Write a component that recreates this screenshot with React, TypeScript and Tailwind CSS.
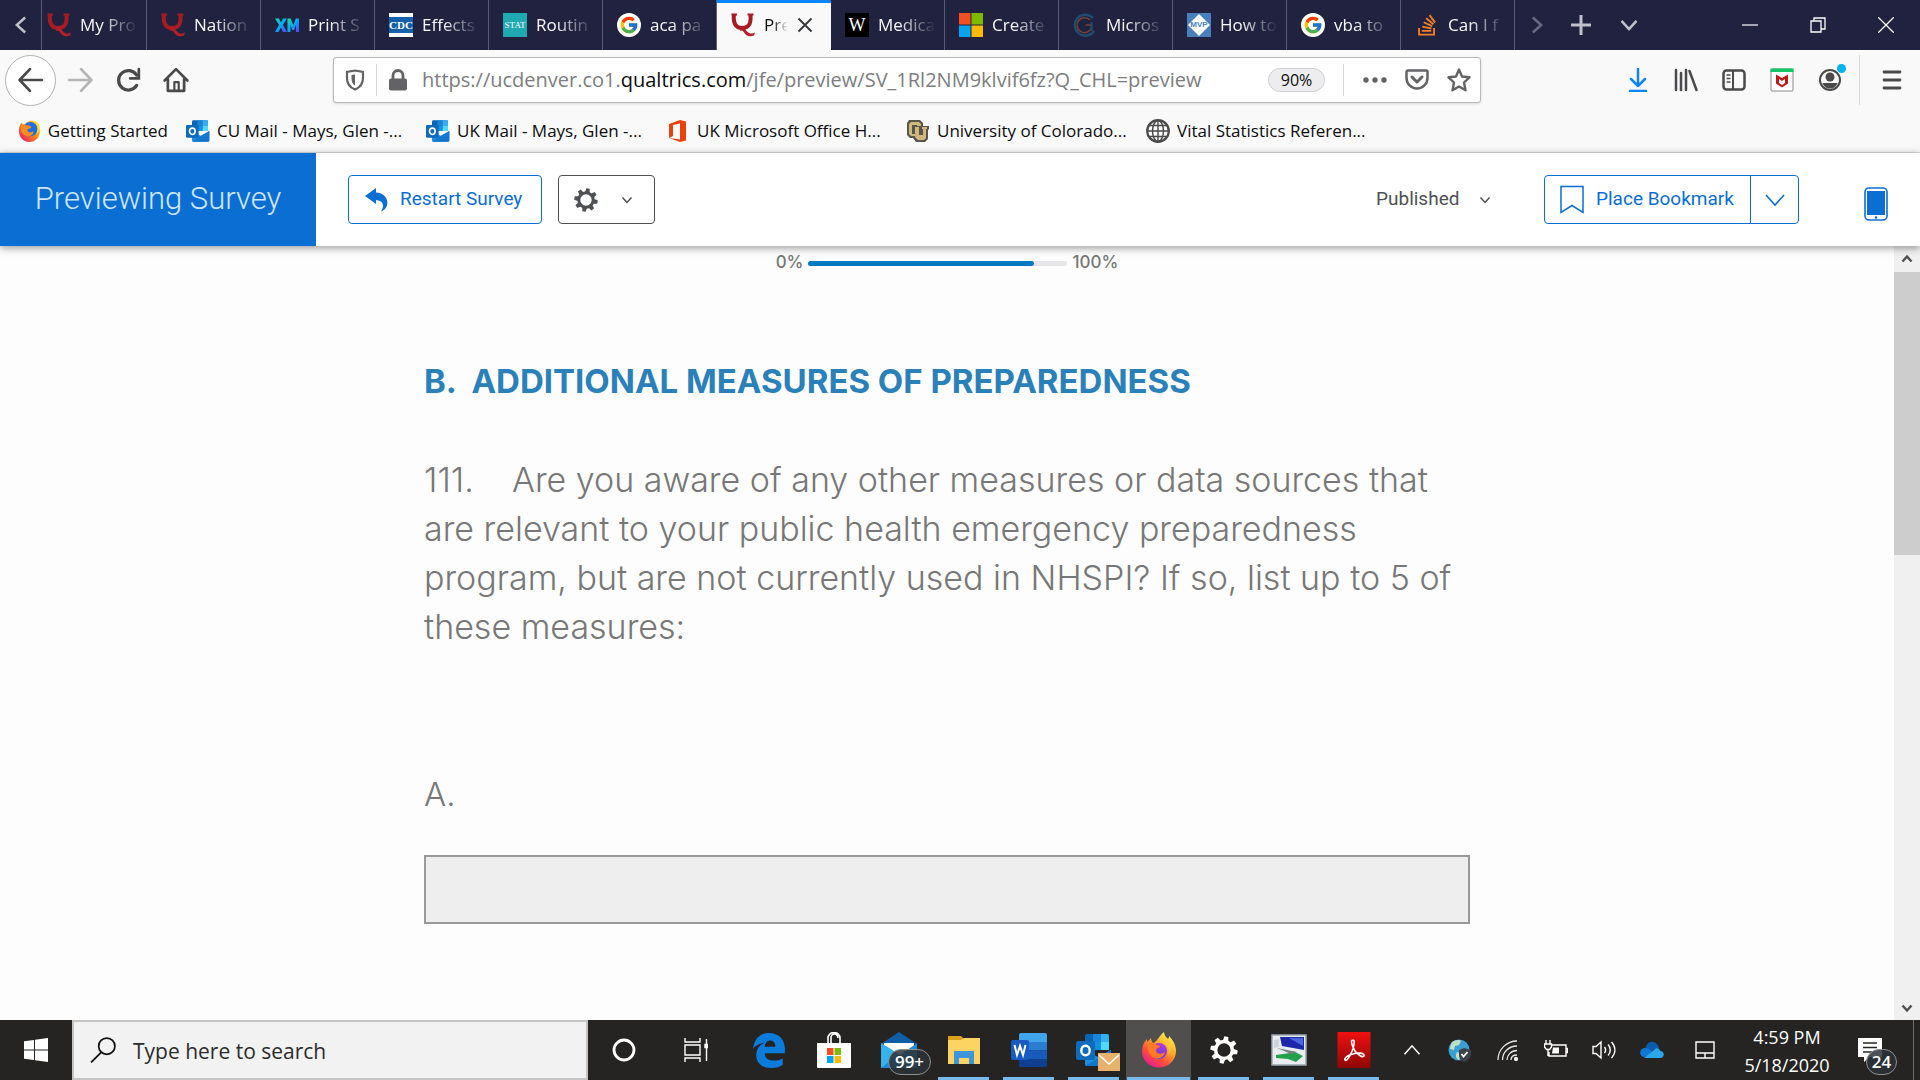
import React from "react";
import { FcGoogle } from "react-icons/fc";
import { FaStackOverflow } from "react-icons/fa";

type P = { className?: string };

const QIcon = ({ className }: P) => (
  <svg viewBox="0 0 24 24" className={className} fill="none">
    <path d="M3 1 C2 9 4 15 11 15 C19 15 20 9 19.500 2" stroke="#a51c24" strokeWidth="4" />
    <path d="M0.500 1.500H6M16.500 1.500H22.500" stroke="#a51c24" strokeWidth="2" />
    <path d="M10 14c3 0 4 2 6 4.500 2 2 5 3 8 1l-1 3c-5 2-8 0-10-3-1-2-2-2-4-1.500z" fill="#b3202a" />
  </svg>
);

const Xm = () => (
  <svg viewBox="0 0 24 24" className="size-6">
    <defs>
      <linearGradient id="xm" x1="0" x2="1" y1="0" y2="1">
        <stop offset="0" stopColor="#21dba0" />
        <stop offset="0.500" stopColor="#05a8f5" />
        <stop offset="1" stopColor="#5c3ff0" />
      </linearGradient>
    </defs>
    <path d="M0 5.500h4L6 9.500l2-4h4L8 12l4 7H8l-2-4.500L3.500 19H0l4-7z" fill="url(#xm)" />
    <path d="M12.500 19V5.500h3.200l2.600 6.500 2.500-6.500H24V19h-3v-7l-1.800 5h-2L15.500 12v7z" fill="url(#xm)" />
  </svg>
);

const Cdc = () => (
  <span className="flex size-6 items-center justify-center bg-white">
    <span className="flex h-4 w-6 items-center justify-center bg-[#1560a8] font-['Liberation_Serif',serif] text-[11px] leading-none font-bold text-white">CDC</span>
  </span>
);
const Stat = () => (
  <span className="flex size-6 items-center justify-center bg-[#1fa9b0] font-['Liberation_Serif',serif] text-[9px] leading-none text-white">STAT</span>
);
const Wiki = () => (
  <span className="flex size-6 items-center justify-center bg-black font-['Liberation_Serif',serif] text-[18px] leading-none text-white">W</span>
);
const Google = () => (
  <span className="flex size-6 items-center justify-center rounded-full bg-white">
    <FcGoogle className="size-5" />
  </span>
);
const MsSquares = ({ className }: P) => (
  <svg viewBox="0 0 24 24" className={className}>
    <path fill="#f25022" d="M0 0h11.500v11.500H0z" />
    <path fill="#7fba00" d="M12.500 0H24v11.500H12.500z" />
    <path fill="#00a4ef" d="M0 12.500h11.500V24H0z" />
    <path fill="#ffb900" d="M12.500 12.500H24V24H12.500z" />
  </svg>
);
const DarkG = () => (
  <svg viewBox="0 0 24 24" className="size-6" fill="none">
    <path d="M20 5a10.500 10.500 0 1 0 1 13" stroke="#1f4c70" strokeWidth="2.500" />
    <path d="M17 7a7.500 7.500 0 1 0 1.500 8v-3h-6" stroke="#7a4138" strokeWidth="1.500" />
    <path d="M18.500 9v9" stroke="#1f4c70" strokeWidth="2" />
  </svg>
);
const Mvp = () => (
  <span className="relative flex size-6 items-center justify-center bg-[#4a7fbd]">
    <svg viewBox="0 0 24 24" className="absolute inset-0 size-6"><path d="M12 1 23 12 12 23 1 12z" fill="#fff" /></svg>
    <span className="relative font-['Liberation_Sans',sans-serif] text-[8px] leading-none font-bold text-[#4a7fbd]">MVP</span>
  </span>
);

const Outlook = ({ className }: P) => (
  <svg viewBox="0 0 36 36" className={className}>
    <path d="M11 2h20a2 2 0 0 1 2 2v14H9V4a2 2 0 0 1 2-2z" fill="#0a64b4" />
    <path d="M17 2h8v8h-8z" fill="#1a86d9" />
    <path d="M25 2h6a2 2 0 0 1 2 2v6h-8z" fill="#33b0f2" />
    <path d="M17 10h8v8h-8z" fill="#1490df" />
    <path d="M25 10h8v8h-8z" fill="#50d9ff" />
    <path d="M9 18 22 25 35 18v14a2 2 0 0 1-2 2H11a2 2 0 0 1-2-2z" fill="#1a8fe0" />
    <path d="M9 34 35 18v14a2 2 0 0 1-2 2z" fill="#1378cc" />
    <rect x="0" y="9" width="19" height="19" rx="2" fill="#0f6cbd" />
    <ellipse cx="9.500" cy="18.500" rx="4.200" ry="4.800" fill="none" stroke="#fff" strokeWidth="2.400" />
  </svg>
);

const FirefoxOld = () => (
  <svg viewBox="0 0 24 24" className="size-6">
    <defs>
      <linearGradient id="fo" x1="0.900" y1="0.100" x2="0.100" y2="0.900">
        <stop offset="0" stopColor="#ffe226" />
        <stop offset="0.450" stopColor="#ff8a16" />
        <stop offset="1" stopColor="#e3206a" />
      </linearGradient>
    </defs>
    <path d="M15 1c6 1 8 6 8 11 0 7-5 11.500-11 11.500S1 19 1 12C1 8 2 5 4 3l1 3c3-2 6-5 10-5z" fill="url(#fo)" />
    <circle cx="13" cy="10" r="7.500" fill="#1c6fe6" />
    <path d="M3 6c3-2 5-1 6 0 2 0 4 0 5 2-1 2-4 1-4 3 0 3 4 3 6 1 1 4-3 6-7 5-5-1-7-6-6-11z" fill="#ff8d1c" />
    <path d="M17 1c4 4 5 10 2 14 5-3 5-10 1-12z" fill="#ffe12e" />
  </svg>
);

const FirefoxNew = () => (
  <svg viewBox="0 0 36 36" className="size-9">
    <defs>
      <linearGradient id="fx" x1="0.800" y1="0.050" x2="0.200" y2="0.950">
        <stop offset="0" stopColor="#fff44f" />
        <stop offset="0.400" stopColor="#ffa12b" />
        <stop offset="0.700" stopColor="#ff4c3c" />
        <stop offset="1" stopColor="#e81b8f" />
      </linearGradient>
      <linearGradient id="fxp" x1="0.700" y1="0" x2="0.300" y2="1">
        <stop offset="0" stopColor="#b635e0" />
        <stop offset="1" stopColor="#5a3fd6" />
      </linearGradient>
    </defs>
    <path d="M23 0c0 3 2 5 4 7 1-1 1-2 1-3 4 4 7 9 7 15 0 9-7.500 16.500-17 16.500S1 28 1 19C1 14 3 10 6 7c0 1 0 2 .5 3L10 6c0 2 1 4 2 5 4-1 5-6 11-11z" fill="url(#fx)" />
    <circle cx="18" cy="19" r="8" fill="url(#fxp)" />
    <path d="M7 12c3-2 7-1 9 1l3 1c0 2-4 2-4 4 0 4 5 5 9 2-1 6-8 8-12 5-4-2-6-8-5-13z" fill="#ff7a22" />
    <path d="M22 9c6 3 7 9 5 14 4-4 4-12-1-16z" fill="#ffc936" />
  </svg>
);

const Chevron = ({ className, w = 2 }: P & { w?: number }) => (
  <svg viewBox="0 0 24 24" className={className} fill="none" stroke="currentColor" strokeWidth={w}>
    <path d="M3 7l9 10 9-10" />
  </svg>
);

const gearTeeth = [0, 45, 90, 135, 180, 225, 270, 315];
const Gear = ({ className }: P) => (
  <svg viewBox="0 0 24 24" className={className}>
    <circle cx="12" cy="12" r="7.200" fill="none" stroke="currentColor" strokeWidth="3" />
    {gearTeeth.map((a) => (
      <path key={a} d="M9.700 4 10.300 0.300h3.400L14.300 4z" fill="currentColor" transform={`rotate(${a + 10} 12 12)`} />
    ))}
  </svg>
);

const tabs: { label: string; icon: React.ReactNode; active?: boolean }[] = [
  { label: "Nation", icon: <QIcon className="size-6" /> },
  { label: "Print S", icon: <Xm /> },
  { label: "Effects", icon: <Cdc /> },
  { label: "Routin", icon: <Stat /> },
  { label: "aca pa", icon: <Google /> },
  { label: "Pre", icon: <QIcon className="size-6" />, active: true },
  { label: "Medica", icon: <Wiki /> },
  { label: "Create", icon: <MsSquares className="size-6" /> },
  { label: "Micros", icon: <DarkG /> },
  { label: "How to", icon: <Mvp /> },
  { label: "vba to", icon: <Google /> },
  { label: "Can I f", icon: <FaStackOverflow className="size-6 text-[#f48024]" /> },
];

const fade = "[mask-image:linear-gradient(to_right,black_35%,transparent)]";

function TabBar() {
  return (
    <header className="flex h-[50px] shrink-0 items-stretch bg-[#20223f] text-[17px] text-[#f9f9fa]">
      <button aria-label="Scroll tabs left" className="flex w-[41px] items-center justify-center text-[#c0c0cb]">
        <Chevron className="size-5 rotate-90" w={3} />
      </button>
      <div role="tablist" className="flex">
        <button role="tab" className="flex w-[106px] items-center gap-[9px] border-x border-[#5c5d74] pl-[5px]">
          <QIcon className="size-6 shrink-0" />
          <span className={`w-[58px] text-left whitespace-nowrap ${fade}`}>My Pro</span>
        </button>
        {tabs.map((t) =>
          t.active ? (
            <div key={t.label} role="tab" aria-selected className="flex w-[114px] items-center gap-[9px] border-t-[3px] border-[#0a84ff] bg-[#f9f9fa] pb-[3px] pl-[14px] text-[#0c0c0d]">
              {t.icon}
              <span className={`w-6 whitespace-nowrap ${fade}`}>{t.label}</span>
              <button aria-label="Close tab">
                <svg viewBox="0 0 16 16" className="size-4" stroke="#3a3a3c" strokeWidth="2"><path d="M1.500 1.500l13 13M14.500 1.500l-13 13" /></svg>
              </button>
            </div>
          ) : (
            <button key={t.label} role="tab" className="flex w-[114px] items-center gap-[9px] border-r border-[#5c5d74] pl-[14px]">
              <span className="shrink-0">{t.icon}</span>
              <span className={`w-[58px] text-left whitespace-nowrap ${fade}`}>{t.label}</span>
            </button>
          ),
        )}
      </div>
      <div className="flex flex-1 items-center text-[#c0c0cb]">
        <button aria-label="Scroll tabs right" className="flex w-11 justify-center text-[#6a6b82]"><Chevron className="size-5 -rotate-90" w={3} /></button>
        <button aria-label="New tab" className="flex w-11 justify-center">
          <svg viewBox="0 0 22 22" className="size-[22px]" stroke="currentColor" strokeWidth="3"><path d="M11 1v20M1 11h20" /></svg>
        </button>
        <button aria-label="List all tabs" className="flex w-[52px] justify-center"><Chevron className="size-5" w={3} /></button>
      </div>
      <div className="flex items-center pr-[26px] text-white">
        <button aria-label="Minimize" className="w-[68px]"><svg viewBox="0 0 16 16" className="size-4" stroke="currentColor" strokeWidth="1.200"><path d="M0 8h16" /></svg></button>
        <button aria-label="Restore" className="w-[68px]"><svg viewBox="0 0 16 16" className="size-4" fill="none" stroke="currentColor" strokeWidth="1.300"><path d="M1 4h10v11H1zM4 4V1h11v11h-4" /></svg></button>
        <button aria-label="Close"><svg viewBox="0 0 16 16" className="size-4" stroke="currentColor" strokeWidth="1.300"><path d="M0 0l16 16M16 0 0 16" /></svg></button>
      </div>
    </header>
  );
}

function NavBar() {
  return (
    <div className="flex h-[60px] shrink-0 items-center text-[#4a4a4b]">
      <div className="flex w-[333px] shrink-0 items-center pl-[5px]">
        <button aria-label="Back" className="flex size-[51px] items-center justify-center rounded-full border border-[#b1b1b3] bg-white">
          <svg viewBox="0 0 24 24" className="size-[26px]" fill="none" stroke="currentColor" strokeWidth="2.500" strokeLinecap="round" strokeLinejoin="round"><path d="M22 12H2M11 2 1.500 12 11 22" /></svg>
        </button>
        <button aria-label="Forward" className="ml-[11px] text-[#b5b5b6]">
          <svg viewBox="0 0 24 24" className="size-[26px]" fill="none" stroke="currentColor" strokeWidth="2.500" strokeLinecap="round" strokeLinejoin="round"><path d="M2 12h20M13 2l9.500 10L13 22" /></svg>
        </button>
        <button aria-label="Reload" className="ml-[22px]">
          <svg viewBox="0 0 24 24" className="size-[26px]" fill="none" stroke="currentColor" strokeWidth="3" strokeLinecap="round"><path d="M20 17a9 9 0 1 1 0-9.500" /><path d="M22 2v8.500h-8" strokeWidth="2.500" /></svg>
        </button>
        <button aria-label="Home" className="ml-[22px]">
          <svg viewBox="0 0 24 24" className="size-[26px]" fill="none" stroke="currentColor" strokeWidth="2.500" strokeLinecap="round" strokeLinejoin="round"><path d="M1.500 12.500 12 2l10.500 10.500M4.500 11v11h15V11" /><path d="M10.500 21v-7h4v7" strokeWidth="2" /></svg>
        </button>
      </div>
      <div className="flex h-[46px] min-w-0 flex-1 items-center rounded-[3px] border border-[#b8b8ba] bg-white pl-[11px] text-[#636365] shadow-sm">
        <button aria-label="Tracking protection">
          <svg viewBox="0 0 20 22" className="h-[22px] w-5" fill="none"><path d="M10 1.500 18 3v6c0 6-3 9.500-8 11.500C5 18.500 2 15 2 9V3z" stroke="currentColor" strokeWidth="2.200" /><path d="M10 5.500v11c-2.500-1.500-3.500-3.500-3.500-7V6z" fill="currentColor" /></svg>
        </button>
        <span className="mx-[11px] h-8 w-px bg-[#d7d7db]" />
        <button aria-label="Site information">
          <svg viewBox="0 0 20 22" className="h-[22px] w-5"><path d="M5 10V6.500a5 5 0 0 1 10 0V10" fill="none" stroke="currentColor" strokeWidth="2.800" /><rect x="1" y="9.500" width="18" height="12" rx="2" fill="currentColor" /></svg>
        </button>
        <div role="textbox" aria-label="Address" className="ml-[14px] flex-1 text-[20px] whitespace-nowrap text-[#7d7d80]">
          https://ucdenver.co1.<span className="text-[#0c0c0d]">qualtrics.com</span>/jfe/preview/SV_1Rl2NM9klvif6fz?Q_CHL=preview
        </div>
        <button className="flex h-6 w-[57px] items-center justify-center rounded-full border border-[#cfcfd1] bg-[#ededf0] text-[16px] text-[#0c0c0d]">90%</button>
        <span className="mr-[19px] ml-[18px] h-8 w-px bg-[#d7d7db]" />
        <div className="flex items-center gap-[18px] pr-[9px]">
          <button aria-label="Page actions"><svg viewBox="0 0 24 24" className="size-6" fill="currentColor"><circle cx="3" cy="12" r="2.700" /><circle cx="12" cy="12" r="2.700" /><circle cx="21" cy="12" r="2.700" /></svg></button>
          <button aria-label="Save to Pocket"><svg viewBox="0 0 24 24" className="size-6" fill="none" stroke="currentColor" strokeWidth="2.500" strokeLinecap="round" strokeLinejoin="round"><path d="M3 2.500h18a1.500 1.500 0 0 1 1.500 1.500v6a10.500 10.500 0 0 1-21 0V4A1.500 1.500 0 0 1 3 2.500z" /><path d="M7 9l5 5 5-5" strokeWidth="3" /></svg></button>
          <button aria-label="Bookmark this page"><svg viewBox="0 0 24 24" className="size-6" fill="none" stroke="currentColor" strokeWidth="2.400" strokeLinejoin="round"><path d="M12 1.500l3 7 7.500.8-5.500 5.200 1.500 7.800L12 18.500l-6.500 3.800L7 14.500 1.500 9.300 9 8.500z" /></svg></button>
        </div>
      </div>
      <div className="flex w-[439px] shrink-0 items-center pl-[145px]">
        <div className="flex items-center gap-6">
          <button aria-label="Downloads" className="text-[#0a84ff]"><svg viewBox="0 0 24 24" className="size-6" fill="none" stroke="currentColor" strokeWidth="2.500" strokeLinecap="round" strokeLinejoin="round"><path d="M12 1v17M5 11l7 7 7-7M4 23h16" /></svg></button>
          <button aria-label="Library"><svg viewBox="0 0 24 24" className="size-6" fill="none" stroke="currentColor" strokeWidth="2.500" strokeLinecap="round"><path d="M2 2v20M7 5v17M12 2v20M15.500 3l7 19" /></svg></button>
          <button aria-label="Sidebars"><svg viewBox="0 0 24 24" className="size-6" fill="none" stroke="currentColor" strokeWidth="2.500"><rect x="1.500" y="2.500" width="21" height="19" rx="3" /><path d="M11 3v18" strokeWidth="2" /><path d="M4.500 7h4M4.500 10.500h4M4.500 14h4" strokeWidth="1.500" /></svg></button>
          <button aria-label="McAfee WebAdvisor"><svg viewBox="0 0 24 24" className="size-6"><rect x="1" y="1" width="22" height="22" rx="1" fill="#fff" stroke="#8a8a8a" /><path d="M0.500 0.500h23V4h-23z" fill="#12c765" /><path d="M6 6.500l6 3.500 6-3.500v9l-6 4-6-4z" fill="#c01818" /><path d="M9 11l3 2 3-2v4l-3 2-3-2z" fill="#fff" /></svg></button>
          <button aria-label="Account" className="relative">
            <svg viewBox="0 0 24 24" className="size-6"><circle cx="12" cy="12" r="10" fill="none" stroke="currentColor" strokeWidth="2" /><circle cx="12" cy="9" r="4.500" fill="currentColor" /><path d="M4.500 15h15c-1 3.500-4 5.500-7.500 5.500S5.500 18.500 4.500 15z" fill="currentColor" /></svg>
            <span className="absolute -top-1 -right-1 size-[9px] rounded-full bg-[#00b3f4]" />
          </button>
        </div>
        <span className="mr-5 ml-[17px] h-[50px] w-px bg-[#d7d7db]" />
        <button aria-label="Menu"><svg viewBox="0 0 24 24" className="size-6" stroke="currentColor" strokeWidth="2.800" strokeLinecap="round"><path d="M4 4h16M4 12h16M4 20h16" /></svg></button>
      </div>
    </div>
  );
}

const Office = () => (
  <svg viewBox="0 0 24 24" className="size-6"><path d="M3 5 14 1l6 1.500v19L14 23 3 19l11 1.500V4.500L7 6v11l-4 2z" fill="#e8420c" /></svg>
);
const Cu = () => (
  <svg viewBox="0 0 24 24" className="size-6">
    <path d="M3 1h11l3 3v3h6v3l-1 1v9l-3 3H10l-3-4H4l-3-3V4z" fill="#5a554c" />
    <path d="M5 3h8l2 2v2h-4V6H6v9h3v2H5l-2-2V5z" fill="#cfb87c" />
    <path d="M9 8h4v8h4V10h-1V8h5v2h-1v9l-2 2h-6l-3-3v-8H9z" fill="#cfb87c" />
  </svg>
);
const Globe = () => (
  <svg viewBox="0 0 24 24" className="size-6" fill="none" stroke="#4a4a4b" strokeWidth="1.400"><circle cx="12" cy="12" r="10.800" strokeWidth="2.200" /><ellipse cx="12" cy="12" rx="5.500" ry="10.500" /><path d="M12 1v22M1 12h22M3 6.500h18M3 17.500h18" /></svg>
);
const bookmarks = [
  { label: "Getting Started", icon: <FirefoxOld /> },
  { label: "CU Mail - Mays, Glen -...", icon: <Outlook className="size-6" /> },
  { label: "UK Mail - Mays, Glen -...", icon: <Outlook className="size-6" /> },
  { label: "UK Microsoft Office H...", icon: <Office /> },
  { label: "University of Colorado...", icon: <Cu /> },
  { label: "Vital Statistics Referen...", icon: <Globe /> },
];

function Bookmarks() {
  return (
    <nav aria-label="Bookmarks" className="flex h-[43px] shrink-0 items-center gap-[18px] border-b border-[#dcdcde] pl-[18px] text-[17px] text-[#0c0c0d]">
      {bookmarks.map((b, i) => (
        <a key={b.label} href="#" className={`flex items-center gap-[7px] whitespace-nowrap ${i > 0 ? "w-[222px]" : "w-[150px]"}`}>
          {b.icon}
          {b.label}
        </a>
      ))}
    </nav>
  );
}

function PreviewHeader() {
  return (
    <div className="relative z-10 flex h-[93px] shrink-0 items-center bg-white font-[Roboto,sans-serif] text-[19px] shadow-[0_2px_8px_rgba(0,0,0,0.4)]">
      <h1 className="flex h-full w-[316px] items-center justify-center bg-[#0b6ed3] text-[31px] font-light text-[#cfe6fb]">Previewing Survey</h1>
      <button className="ml-8 flex h-[49px] w-[194px] items-center gap-[11px] rounded-[4px] border border-[#0b6ed3] pl-4 text-[#0b6ed3]">
        <svg viewBox="0 0 24 24" className="size-6" fill="currentColor"><path d="M0 8 11 0v4.500c8 0 13 7 11 13-1 3-3 5-6 6 4-6 2-11-5-11.500V16z" /></svg>
        Restart Survey
      </button>
      <button aria-label="Settings" className="ml-4 flex h-[49px] w-[97px] items-center gap-[23px] rounded-[4px] border border-[#4e5053] pl-[15px] text-[#4e5053]">
        <Gear className="size-6" />
        <Chevron className="size-3" w={3} />
      </button>
      <div className="relative ml-auto flex items-center text-[#4e5053]">
        <select aria-label="Version" className="w-[115px] appearance-none bg-transparent">
          <option>Published</option>
        </select>
        <Chevron className="pointer-events-none absolute right-0 size-3" w={3} />
      </div>
      <div className="ml-[53px] flex h-[49px] rounded-[4px] border border-[#0b6ed3] text-[#0b6ed3]">
        <button className="flex w-[205px] items-center gap-3 pl-[15px]">
          <svg viewBox="0 0 24 30" className="h-[30px] w-6" fill="none" stroke="currentColor" strokeWidth="1.500"><path d="M1 1.500h22v26l-11-7-11 7z" /></svg>
          Place Bookmark
        </button>
        <button aria-label="Bookmark options" className="flex w-[48px] items-center justify-center border-l border-[#0b6ed3]"><Chevron className="size-6" w={1.6} /></button>
      </div>
      <button aria-label="Mobile view" className="mr-8 ml-[65px] pt-2">
        <svg viewBox="0 0 24 34" className="h-[34px] w-6"><rect x="1" y="1" width="22" height="32" rx="4" fill="#fff" stroke="#0b6ed3" strokeWidth="1.600" /><path d="M3 4h18v24H3z" fill="#0b6ed3" /><circle cx="12" cy="30.500" r="1.300" fill="#0b6ed3" /></svg>
      </button>
    </div>
  );
}

function Survey() {
  return (
    <div className="flex min-h-0 flex-1 bg-[#fdfdfd] font-[Inter,sans-serif]">
      <main className="min-w-0 flex-1 overflow-hidden">
        <div className="mx-auto max-w-[1046px] text-[#777]">
          <div className="flex h-[34px] items-center justify-center gap-[5px] text-[17px] font-medium">
            <span>0%</span>
            <div role="progressbar" aria-valuenow={87} className="h-[5px] w-[259px] rounded-full bg-[#e6e6e9]">
              <div className="h-full w-[87%] rounded-full bg-[#007ac0]" />
            </div>
            <span>100%</span>
          </div>
          <h2 className="mt-[77px] text-[33px] leading-[49px] font-bold whitespace-pre text-[#2a80b9]">B.  ADDITIONAL MEASURES OF PREPAREDNESS</h2>
          <p className="mt-[49px] text-[34px] leading-[49px] font-light whitespace-pre">
            {"111.    Are you aware of any other measures or data sources that\nare relevant to your public health emergency preparedness\nprogram, but are not currently used in NHSPI? If so, list up to 5 of\nthese measures:"}
          </p>
          <label htmlFor="answer-a" className="mt-[119px] block text-[33px] leading-[49px] font-light">A.</label>
          <input id="answer-a" type="text" className="mt-9 block h-[69px] w-full border-2 border-[#999] bg-[#eee] px-4" />
        </div>
      </main>
      <div className="flex w-[26px] shrink-0 flex-col items-center bg-[#f0f0f0] text-[#505050]">
        <button aria-label="Scroll up" className="flex h-[26px] items-center"><Chevron className="size-3 rotate-180" w={5} /></button>
        <div className="h-[283px] w-full bg-[#cdcdcd]" />
        <button aria-label="Scroll down" className="mt-auto flex h-6 items-center"><Chevron className="size-3" w={5} /></button>
      </div>
    </div>
  );
}

const Badge = ({ children, className }: { children: React.ReactNode; className: string }) => (
  <span className={`absolute flex h-[26px] items-center justify-center rounded-full border border-[#8f9090] bg-[#2d3338]/85 text-[17px] font-semibold text-white ${className}`}>{children}</span>
);

const apps: { label: string; run?: boolean; active?: boolean; icon: React.ReactNode }[] = [
  { label: "Microsoft Edge", icon: <svg viewBox="0 0 32 34" className="size-9"><path d="M1 16C2 6 8 1 16 1c9 0 15 6 15 15v4H12c0 5 4 7 9 7 3 0 6-1 8-2v6c-3 2-6 3-11 3C9 34 4 29 4 22c0-6 3-10 8-12-6 1-9 3-11 6zm11-2h10c0-4-2-6-5-6s-5 3-5 6z" fill="#0b7cdb" /></svg> },
  { label: "Microsoft Store", icon: <svg viewBox="0 0 36 36" className="size-9"><path d="M12 11V6a6 5.500 0 0 1 12 0v5M15 11V6a3 3.500 0 0 1 7 0" fill="none" stroke="#fff" strokeWidth="1.600" /><path d="M1 11h34v24a1 1 0 0 1-1 1H2a1 1 0 0 1-1-1z" fill="#fff" /><path d="M11 16h6.500v7H11z" fill="#f25022" /><path d="M18.500 16H25v7h-6.500z" fill="#7fba00" /><path d="M11 24h6.500v7H11z" fill="#00a4ef" /><path d="M18.500 24H25v7h-6.500z" fill="#ffb900" /></svg> },
  { label: "Mail", icon: <><svg viewBox="0 0 36 36" className="size-9"><path d="M0 12 18 0l18 12z" fill="#0f5ea8" /><path d="M3 11h30v12H3z" fill="#fff" /><path d="M0 11l18 13 18-13v25H0z" fill="#1c8ad6" /><path d="M0 36 18 22 0 11z" fill="#35b3ee" /></svg><Badge className="top-[29px] left-[21px] w-[43px]">99+</Badge></> },
  { label: "File Explorer", run: true, icon: <svg viewBox="0 0 36 36" className="size-9"><path d="M2 4h13l3 3v5H2z" fill="#dca020" /><path d="M2 8h13l3-2h16v26H2z" fill="#fcd462" /><path d="M8 19h20v13h-5v-6H13v6H8z" fill="#3f95da" /></svg> },
  { label: "Word", run: true, icon: <svg viewBox="0 0 36 36" className="size-9"><path d="M10 1h24a2 2 0 0 1 2 2v7H8V3a2 2 0 0 1 2-2z" fill="#41a5ee" /><path d="M8 10h28v8.500H8z" fill="#2b7cd3" /><path d="M8 18.500h28V27H8z" fill="#185abd" /><path d="M8 27h28v6a2 2 0 0 1-2 2H10a2 2 0 0 1-2-2z" fill="#103f91" /><rect y="8" width="18" height="20" rx="2" fill="#185abd" /><path d="M3.500 13 6 23l3-9 3 9 2.500-10" fill="none" stroke="#fff" strokeWidth="2" /></svg> },
  { label: "Outlook", run: true, icon: <><Outlook className="size-9" /><svg viewBox="0 0 22 18" className="absolute right-[5px] bottom-[9px] h-[18px] w-[22px]"><path d="M0 0h22v18H0z" fill="#e9b26c" /><path d="M1 2l10 9L21 2" fill="none" stroke="#fff" strokeWidth="1.500" /></svg></> },
  { label: "Firefox", run: true, active: true, icon: <FirefoxNew /> },
  { label: "Settings", run: true, icon: <Gear className="size-7 text-white" /> },
  { label: "Installer", run: true, icon: <svg viewBox="0 0 36 32" className="h-8 w-9"><path d="M1 1h34v30H1z" fill="#e9edf0" stroke="#9aa6b0" strokeWidth="1.500" /><path d="M9 3h24v13l-22-4z" fill="#1c28a8" /><path d="M18 4h14v8z" fill="#4b66e0" /><path d="M3 6l5-1v8l-5 1z" fill="#cfd5d8" /><path d="M5 21l14-2 3-2 10 5-7 6-8-3-12-1z" fill="#22a04c" /><path d="M6 14l20 4-6 2z" fill="#777f86" /></svg> },
  { label: "Adobe Acrobat", run: true, icon: <svg viewBox="0 0 36 36" className="size-9"><defs><linearGradient id="pdf" x1="0" y1="0" x2="0" y2="1"><stop offset="0" stopColor="#f21010" /><stop offset="1" stopColor="#8e0606" /></linearGradient></defs><path d="M1.500 0h33v36h-33z" fill="url(#pdf)" /><path d="M17 8c-3 0-1 6 2 11 3 4 8 7 9 5 1-3-6-4-11-2-5 1-9 4-8 6 2 2 6-6 8-11 1-4 2-9 0-9z" fill="none" stroke="#fff" strokeWidth="1.600" /></svg> },
];

const tray = "flex w-12 justify-center";

function Taskbar() {
  return (
    <footer className="flex h-[60px] shrink-0 items-stretch bg-[#252423] text-white">
      <button aria-label="Start" className="flex w-[72px] shrink-0 items-center justify-center">
        <svg viewBox="0 0 24 24" className="size-6" fill="#fff"><path d="M0 3.300 10 2v9.500H0zM11 1.800 24 0v11.500H11zM0 12.500h10V22L0 20.700zM11 12.500h13V24l-13-1.800z" /></svg>
      </button>
      <label className="flex w-[516px] items-center gap-[17px] border-2 border-[#c4c4c4] bg-[#f2f2f2] pl-4">
        <svg viewBox="0 0 24 24" className="size-[26px]" fill="none" stroke="#111" strokeWidth="1.600"><circle cx="15.500" cy="8.500" r="7.500" /><path d="M10.500 14 1 23.500" /></svg>
        <input type="search" aria-label="Search" placeholder="Type here to search" className="min-w-0 flex-1 bg-transparent pt-1 text-[21px] outline-none placeholder:text-[#2b2b2b]" />
      </label>
      <button aria-label="Cortana" className="flex w-[72px] shrink-0 items-center justify-center"><svg viewBox="0 0 24 24" className="size-6"><circle cx="12" cy="12" r="10" fill="none" stroke="#fff" strokeWidth="2.800" /></svg></button>
      <button aria-label="Task view" className="flex w-[72px] shrink-0 items-center justify-center">
        <svg viewBox="0 0 24 24" className="size-6" fill="none" stroke="#fff" strokeWidth="1.400"><path d="M1 0v4h15V0M1 24v-4h15v4M1 7h15v10H1zM22.500 1v22" /><path d="M21 6.500h3v3h-3z" fill="#fff" /></svg>
      </button>
      <div className="ml-1 flex shrink-0">
        {apps.map((a) => (
          <button key={a.label} aria-label={a.label} className={`relative flex w-[65px] items-center justify-center border-x ${a.active ? "border-[#504f4e] bg-[#504f4e]" : "border-transparent"}`}>
            {a.icon}
            {a.run && <span className={`absolute bottom-0 h-[3px] bg-[#76b9ed] ${a.active ? "inset-x-0" : "inset-x-[6px]"}`} />}
          </button>
        ))}
      </div>
      <div className="ml-auto flex shrink-0 items-center">
        <button aria-label="Show hidden icons" className={tray}><Chevron className="size-5 rotate-180" w={1.800} /></button>
        <button aria-label="VPN" className={tray}>
          <svg viewBox="0 0 24 24" className="size-6"><circle cx="11" cy="12" r="10.500" fill="#3b9fd4" /><path d="M4 4c3-2 7-3 9-1l-2 4-4 1-1 4-4-1c0-3 1-5 2-7zM9 14l5 2-3 6c-3-1-4-4-2-8z" fill="#bfe0c8" /><path d="M16 10l7 2v4c0 4-3 6-7 8-4-2-5-4-5-8v-4z" fill="#3c4348" /><path d="M13.500 16l2 2.500 4-4.500" fill="none" stroke="#fff" strokeWidth="1.800" /></svg>
        </button>
        <button aria-label="Network" className={tray}>
          <svg viewBox="0 0 22 22" className="size-[22px]" fill="none" stroke="#e8e8e8" strokeWidth="1.300"><path d="M1 21C1 10 10 2 20 2M5.500 21C5.500 13 12 7 20 7M10 21c0-5 4-9.500 10-9.500M14 21c0-3 2-5 6-5" /><circle cx="19" cy="20" r="1.500" fill="#fff" /></svg>
        </button>
        <button aria-label="Battery" className={tray}>
          <svg viewBox="0 0 24 22" className="h-[22px] w-6" fill="none" stroke="#fff" strokeWidth="1.400"><path d="M8 6h14v11H5v-4M22 9.500h1.500v4H22M2 1v4M6 1v4M0.500 5h7v3L5.500 10.500h-3L0.500 8zM4 10.500V17" /><path d="M9 8.500h6v6H8z" fill="#fff" stroke="none" /></svg>
        </button>
        <button aria-label="Volume" className={tray}>
          <svg viewBox="0 0 24 22" className="h-[22px] w-6" fill="none" stroke="#fff" strokeWidth="1.400"><path d="M1 7.500h3L9 3v16l-5-4.500H1zM12.500 8c1.500 2 1.500 4 0 6M16 5.500c3 3 3 8 0 11M19.500 3c4.500 5 4.500 11 0 16" /></svg>
        </button>
        <button aria-label="OneDrive" className={tray}>
          <svg viewBox="0 0 24 18" className="h-[18px] w-6"><path d="M6 12C4 4 9 0 13 1c3 0 5 3 6 6z" fill="#0a5cb0" /><path d="M5 16c-7 0-6-9 0-9 3 0 6 2 9 5z" fill="#0f78d4" /><path d="M4 17 14 9c2-3 6-2 6 1 5 0 5 7 0 7z" fill="#2aa6ea" /></svg>
        </button>
        <button aria-label="Touchpad" className="flex w-[58px] justify-center">
          <svg viewBox="0 0 20 18" className="h-[18px] w-5" fill="none" stroke="#fff" strokeWidth="1.400"><path d="M1 1h18v16H1zM1 12h18M10 12v5" /></svg>
        </button>
        <div className="flex w-[106px] flex-col items-center pt-[2px] text-[18px] leading-7">
          <time>4:59 PM</time>
          <time>5/18/2020</time>
        </div>
        <button aria-label="Notifications, 24 new" className="relative flex h-full w-[73px] items-center pl-[18px]">
          <svg viewBox="0 0 24 24" className="size-6"><path d="M0 0h24v19H12l-6 5v-5H0z" fill="#fff" /><path d="M5 5h14M5 9.500h14M5 14h9" stroke="#252423" strokeWidth="1.400" /></svg>
          <Badge className="top-[29px] left-[26px] w-[31px]">24</Badge>
        </button>
        <div className="mr-[6px] h-full w-px bg-[#6d6c6b]" />
      </div>
    </footer>
  );
}

export default function App() {
  return (
    <div className="flex h-screen flex-col overflow-hidden bg-[#f9f9fa] font-['Open_Sans',sans-serif]">
      <TabBar />
      <NavBar />
      <Bookmarks />
      <PreviewHeader />
      <Survey />
      <Taskbar />
    </div>
  );
}
